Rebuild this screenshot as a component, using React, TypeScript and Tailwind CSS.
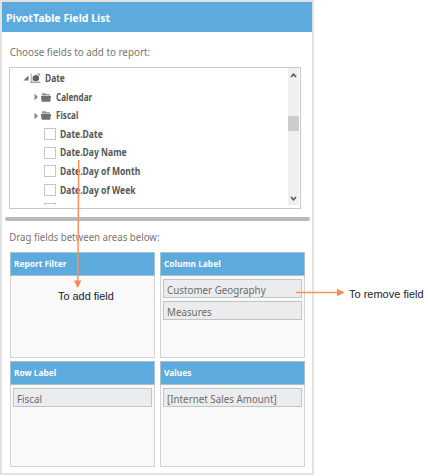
import React from "react";

const SANS = "font-['Noto_Sans','Open_Sans',sans-serif]";

function Folder() {
  return (
    <svg width="10" height="9" viewBox="0 0 10 9" className="shrink-0">
      <path d="M1 2.6V.8Q1 .3 1.5 .3H4.3L5.2 1.2H8.5Q9 1.2 9 1.7V2.6Z" fill="#8c8c8c" />
      <path d="M0 3H10L9.4 8.3Q9.3 8.8 8.8 8.8H1.2Q.7 8.8 .6 8.3Z" fill="#707070" />
    </svg>
  );
}

function Dimension() {
  return (
    <svg width="11" height="11" viewBox="0 0 11 11" className="shrink-0">
      <path d="M1.2 .5V10M.3 9.5H10.5M1.2 9.5L4 7M9.3 .8L7 3M7.5 .8H9.8V3M7.5 7.5L9.5 9.5" stroke="#999999" strokeWidth=".9" fill="none" />
      <path d="M5.8 1.8L9 3.5V7L5.8 8.8L2.7 7V3.5Z" fill="#626262" />
    </svg>
  );
}

function FolderRow({ label }: { label: string }) {
  return (
    <div className="flex h-[18.5px] shrink-0 items-center pl-6">
      <svg width="5" height="8" viewBox="0 0 5 8"><path d="M.5 .8L4 4L.5 7.2Z" fill="#858585" /></svg>
      <span className="ml-[2px] flex"><Folder /></span>
      <span className="ml-[5px] origin-left scale-x-[0.81] text-[10px]">{label}</span>
    </div>
  );
}

function CheckRow({ label }: { label: string }) {
  return (
    <div className="flex h-[18.6px] shrink-0 items-center pl-[34px]">
      <span className="size-[12px] shrink-0 border border-[#c6c6c6] bg-white" />
      <span className="ml-[4px] origin-left scale-x-[0.855] text-[10px]">{label}</span>
    </div>
  );
}

function Area({ title, items }: { title: string; items: string[] }) {
  return (
    <section className="flex h-[106px] w-[145px] flex-col border border-[#d3d3d3] bg-[#f9f9f9]">
      <h2 className="-mx-px -mt-px flex h-[24px] shrink-0 items-center border border-[#a9bfcf] bg-[#5daadd] pl-[3px] text-[9.4px] font-bold text-white">
        <span className="origin-left scale-x-[0.89]">{title}</span>
      </h2>
      <div className="flex flex-col gap-[3px] px-[2px] pt-[3px]">
        {items.map((item) => (
          <div key={item} className="flex h-[19px] items-center border border-[#c4c4c4] bg-[#ebecee] pt-px pl-[3px] text-[11px] leading-none text-[#6b6b6b]">
            <span className="origin-left scale-x-[0.89]">{item}</span>
          </div>
        ))}
      </div>
    </section>
  );
}

export default function App() {
  return (
    <main className={`relative h-[476px] w-[428px] overflow-hidden bg-white whitespace-nowrap ${SANS}`}>
      <div className="flex h-[475px] w-[314px] flex-col border-2 border-[#e2e2e2] bg-white">
        <h1 className="flex h-[30px] shrink-0 items-center bg-[#5daadd] pt-[3px] pl-1 text-[11.3px] font-bold text-white">
          <span className="origin-left scale-x-[0.935]">PivotTable Field List</span>
        </h1>
        <p className="mt-[12px] h-4 origin-left scale-x-[0.912] pl-[8.5px] text-[10.8px] leading-4 text-[#757575]">Choose fields to add to report:</p>
        <div className="mt-[7px] ml-[7px] flex h-[142px] w-[292px] shrink-0 border border-[#c8c8c8]">
          <div className="flex h-[137px] w-[278px] flex-col overflow-hidden font-bold text-[#575757]">
            <div className="flex h-[20px] shrink-0 items-center pl-[13px]">
              <svg width="6" height="6" viewBox="0 0 6 6"><path d="M5.5 .5V5.5H.5Z" fill="#707070" /></svg>
              <span className="ml-px flex"><Dimension /></span>
              <span className="ml-1 origin-left scale-x-[0.84] text-[10px]">Date</span>
            </div>
            <FolderRow label="Calendar" />
            <FolderRow label="Fiscal" />
            <CheckRow label="Date.Date" />
            <CheckRow label="Date.Day Name" />
            <CheckRow label="Date.Day of Month" />
            <CheckRow label="Date.Day of Week" />
            <CheckRow label="" />
          </div>
          <div className="flex h-[137px] w-[11px] flex-col items-center bg-[#f0f0f0]">
            <svg width="7" height="5" viewBox="0 0 7 5" className="mt-[5px]"><path d="M1 4L3.5 1.3L6 4" fill="none" stroke="#575757" strokeWidth="1.6" /></svg>
            <div className="mt-[38px] h-[15px] w-full bg-[#cccccc]" />
            <svg width="7" height="5" viewBox="0 0 7 5" className="mt-auto mb-1"><path d="M1 1L3.5 3.7L6 1" fill="none" stroke="#575757" strokeWidth="1.6" /></svg>
          </div>
        </div>
        <div className="mt-[8px] ml-[3px] h-[4px] w-[305px] shrink-0 rounded-full bg-[#bababa]" />
        <p className="mt-[8px] h-4 shrink-0 origin-left scale-x-[0.895] pl-[8px] text-[10.8px] leading-4 text-[#757575]">Drag fields between areas below:</p>
        <div className="mt-[7px] ml-[8px] grid w-[295px] grid-cols-[145px_145px] gap-x-[5px] gap-y-[3px]">
          <Area title="Report Filter" items={[]} />
          <Area title="Column Label" items={["Customer Geography", "Measures"]} />
          <Area title="Row Label" items={["Fiscal"]} />
          <Area title="Values" items={["[Internet Sales Amount]"]} />
        </div>
      </div>
      <svg className="pointer-events-none absolute inset-0" width="428" height="476">
        <path d="M78.7 160L77.8 282M296 292.5H338" stroke="#ff905c" strokeWidth="1.5" />
        <path d="M74 280.5H81.5L77.7 288ZM337 288.7V296.3L344.5 292.5Z" fill="#ff8850" />
      </svg>
      <span className="absolute top-[288px] left-[58px] font-['Liberation_Sans',Arial,sans-serif] text-[10.9px] leading-4 text-[#202030]">To add field</span>
      <span className="absolute top-[286px] left-[349px] font-['Liberation_Sans',Arial,sans-serif] text-[11px] leading-4 text-[#202030]">To remove field</span>
    </main>
  );
}
